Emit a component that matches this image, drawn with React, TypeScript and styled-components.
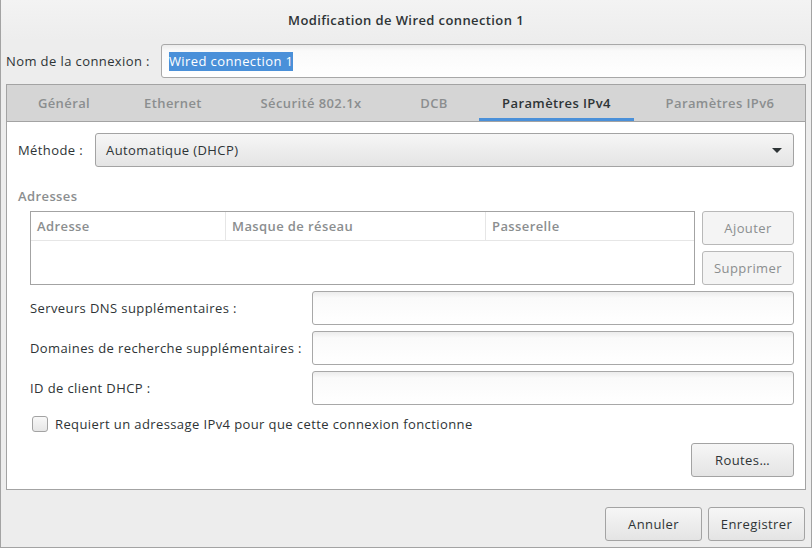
import React from "react";
import styled, { createGlobalStyle } from "styled-components";

const Global = createGlobalStyle`
  html, body { margin: 0; padding: 0; background: #ededed; }
  body { font-family: "Open Sans", "Noto Sans", sans-serif; font-size: 13px; letter-spacing: 0.4px; color: #2e3436; }
  * { box-sizing: border-box; }
`;

const Window = styled.div`
  width: 812px;
  height: 548px;
  background: #ededed;
  border: 1px solid #a3a3a3;
  border-top: none;
  display: flex;
  flex-direction: column;
`;

const TitleBar = styled.div`
  height: 40px;
  display: flex;
  align-items: center;
  justify-content: center;
  font-weight: 600;
  font-size: 13px;
  color: #2e3436;
  background: linear-gradient(#f3f3f3, #ededed);
`;

const NameRow = styled.div`
  display: flex;
  align-items: center;
  gap: 11px;
  padding: 4px 5px 0 5px;
`;

const Label = styled.span<{ $muted?: boolean }>`
  color: ${(p) => (p.$muted ? "#8b8e8f" : "#2e3436")};
  white-space: nowrap;
`;

const Entry = styled.div<{ $w?: number }>`
  flex: ${(p) => (p.$w ? "none" : "1")};
  width: ${(p) => (p.$w ? `${p.$w}px` : "auto")};
  height: 34px;
  border: 1px solid #a8a8a8;
  border-radius: 3px;
  background: linear-gradient(#ececec, #fafafa 6px, #ffffff);
  display: flex;
  align-items: center;
  padding: 0 7px;
`;

const Selected = styled.span`
  background: #4a90d9;
  color: #ffffff;
  line-height: 19px;
`;

const Notebook = styled.div`
  margin: 6px 5px 0 5px;
  height: 406px;
  border: 1px solid #a3a3a3;
  background: #ffffff;
  display: flex;
  flex-direction: column;
`;

const TabBar = styled.div`
  height: 37px;
  background: #d5d5d5;
  border-bottom: 1px solid #a3a3a3;
  display: flex;
  gap: 8px;
  padding-left: 8px;
`;

const Tab = styled.div<{ $w: number; $active?: boolean }>`
  width: ${(p) => p.$w}px;
  display: flex;
  align-items: center;
  justify-content: center;
  font-weight: 600;
  color: ${(p) => (p.$active ? "#2e3436" : "#8b8e8f")};
  border-bottom: 3px solid ${(p) => (p.$active ? "#4a90d9" : "transparent")};
  padding-top: 3px;
  white-space: nowrap;
`;

const Content = styled.div`
  flex: 1;
  padding: 11px 11px 0 11px;
  display: flex;
  flex-direction: column;
`;

const Row = styled.div`
  display: flex;
  align-items: center;
  gap: 12px;
`;

const Combo = styled.div`
  flex: 1;
  height: 34px;
  border: 1px solid #a3a3a3;
  border-radius: 3px;
  background: linear-gradient(#f6f6f6, #e4e4e4);
  display: flex;
  align-items: center;
  justify-content: space-between;
  padding: 0 11px 0 10px;
`;

const Arrow = styled.span`
  width: 0;
  height: 0;
  border-left: 5px solid transparent;
  border-right: 5px solid transparent;
  border-top: 5px solid #2e3436;
`;

const SectionTitle = styled.div`
  margin-top: 20px;
  color: #8b8e8f;
  font-weight: 600;
`;

const Indented = styled.div`
  padding-left: 12px;
  display: flex;
  flex-direction: column;
`;

const AddrRow = styled.div`
  margin-top: 6px;
  display: flex;
  gap: 7px;
`;

const Table = styled.div`
  flex: 1;
  height: 74px;
  border: 1px solid #a3a3a3;
  background: #ffffff;
`;

const THead = styled.div`
  height: 29px;
  display: flex;
  border-bottom: 1px solid #e6e6e6;
`;

const Th = styled.div<{ $w?: number }>`
  width: ${(p) => (p.$w ? `${p.$w}px` : "auto")};
  flex: ${(p) => (p.$w ? "none" : "1")};
  padding-left: 6px;
  display: flex;
  align-items: center;
  color: #8b8e8f;
  font-weight: 600;
  border-right: 1px solid #e6e6e6;
  &:last-child { border-right: none; }
`;

const SideButtons = styled.div`
  display: flex;
  flex-direction: column;
  gap: 6px;
`;

const Button = styled.div<{ $w: number; $disabled?: boolean }>`
  width: ${(p) => p.$w}px;
  height: 34px;
  border: 1px solid ${(p) => (p.$disabled ? "#b8b8b8" : "#a3a3a3")};
  border-radius: 3px;
  background: ${(p) => (p.$disabled ? "#f4f4f4" : "linear-gradient(#f6f6f6, #e4e4e4)")};
  color: ${(p) => (p.$disabled ? "#8b8e8f" : "#2e3436")};
  display: flex;
  align-items: center;
  justify-content: center;
`;

const Fields = styled.div`
  margin-top: 6px;
  display: flex;
  flex-direction: column;
  gap: 6px;
`;

const FieldRow = styled.div`
  display: flex;
  align-items: center;
  justify-content: space-between;
`;

const CheckRow = styled.label`
  margin-top: 10px;
  display: flex;
  align-items: center;
  gap: 7px;
  padding-left: 2px;
`;

const Box = styled.span`
  width: 16px;
  height: 16px;
  border: 1px solid #a3a3a3;
  border-radius: 3px;
  background: linear-gradient(#f8f8f8, #e6e6e6);
`;

const RoutesRow = styled.div`
  margin-top: 10px;
  display: flex;
  justify-content: flex-end;
`;

const Footer = styled.div`
  flex: 1;
  display: flex;
  justify-content: flex-end;
  align-items: flex-start;
  gap: 6px;
  padding: 17px 6px 0 0;
`;

const tabs = [
  { label: "Général", w: 98 },
  { label: "Ethernet", w: 104 },
  { label: "Sécurité 802.1x", w: 156 },
  { label: "DCB", w: 74 },
  { label: "Paramètres IPv4", w: 155, active: true },
  { label: "Paramètres IPv6", w: 156 },
];

export default function App() {
  return (
    <>
      <Global />
      <Window>
        <TitleBar>Modification de Wired connection 1</TitleBar>
        <NameRow>
          <Label>Nom de la connexion :</Label>
          <Entry>
            <Selected>Wired connection 1</Selected>
          </Entry>
        </NameRow>
        <Notebook>
          <TabBar>
            {tabs.map((t) => (
              <Tab key={t.label} $w={t.w} $active={t.active}>
                {t.label}
              </Tab>
            ))}
          </TabBar>
          <Content>
            <Row>
              <Label>Méthode :</Label>
              <Combo>
                <span>Automatique (DHCP)</span>
                <Arrow />
              </Combo>
            </Row>
            <SectionTitle>Adresses</SectionTitle>
            <Indented>
              <AddrRow>
                <Table>
                  <THead>
                    <Th $w={195}>Adresse</Th>
                    <Th $w={260}>Masque de réseau</Th>
                    <Th>Passerelle</Th>
                  </THead>
                </Table>
                <SideButtons>
                  <Button $w={92} $disabled>Ajouter</Button>
                  <Button $w={92} $disabled>Supprimer</Button>
                </SideButtons>
              </AddrRow>
              <Fields>
                <FieldRow>
                  <Label>Serveurs DNS supplémentaires :</Label>
                  <Entry $w={482} />
                </FieldRow>
                <FieldRow>
                  <Label>Domaines de recherche supplémentaires :</Label>
                  <Entry $w={482} />
                </FieldRow>
                <FieldRow>
                  <Label>ID de client DHCP :</Label>
                  <Entry $w={482} />
                </FieldRow>
              </Fields>
              <CheckRow>
                <Box />
                <Label>Requiert un adressage IPv4 pour que cette connexion fonctionne</Label>
              </CheckRow>
              <RoutesRow>
                <Button $w={103}>Routes…</Button>
              </RoutesRow>
            </Indented>
          </Content>
        </Notebook>
        <Footer>
          <Button $w={97}>Annuler</Button>
          <Button $w={97}>Enregistrer</Button>
        </Footer>
      </Window>
    </>
  );
}
